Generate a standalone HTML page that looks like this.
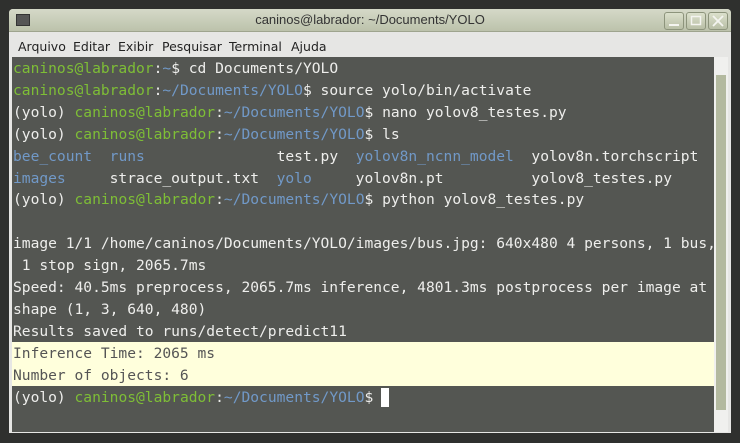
<!DOCTYPE html>
<html><head><meta charset="utf-8"><style>
html,body{margin:0;padding:0;width:740px;height:443px;overflow:hidden;background:#2f302e;}
.win{position:absolute;left:9px;top:9px;width:722px;height:424px;background:#e6e6e4;border-radius:4px 4px 0 0;}
.title{position:absolute;left:0;top:0;width:722px;height:22px;background:linear-gradient(#d5d9c8,#bcc2ab);border-radius:4px 4px 0 0;border-bottom:1px solid #9ea48e;}
.title .t{position:absolute;left:0;width:722px;top:3px;text-align:center;font:13px "Liberation Sans",sans-serif;color:#333;}
.ticon{position:absolute;left:7px;top:5px;width:12px;height:10px;border:1px solid #333;background:#555;}
.btn{position:absolute;top:3px;width:18px;height:16px;border:1px solid #8d947c;border-radius:3px;background:linear-gradient(#dbe0cc,#b9bfa6);}
.btn svg{position:absolute;left:0;top:0}
.menu{position:absolute;left:0;top:23px;height:26px;width:722px;font:12.5px "DejaVu Sans","Liberation Sans",sans-serif;color:#222;}
.menu span{position:absolute;top:7px;}
.term{position:absolute;left:3px;top:48px;width:702px;height:375px;background:#545652;}
.sb{position:absolute;left:705px;top:48px;width:14px;height:375px;background:#f0f0ee;}
.sb .th{position:absolute;left:2px;top:18px;width:10px;height:335px;background:#b3b99f;}
.lines{position:absolute;left:13px;top:58px;font:14.6px "DejaVu Sans Mono","Liberation Mono",monospace;color:#eeeeec;white-space:pre;line-height:21.9px;}
.g{color:#7ebe36}.b{color:#7199c8}
.hl{position:absolute;left:12px;top:342px;width:702px;height:44px;background:#ffffdc;}
.cur{position:absolute;left:381px;top:388px;width:8px;height:19px;background:#fff;}
</style></head><body>
<div class="win">
 <div class="title"><div class="ticon"></div><div class="t">caninos@labrador: ~/Documents/YOLO</div>
  <div class="btn" style="left:655px"><svg width="18" height="16"><path d="M4 12H14" stroke="#f4f4f0" stroke-width="2"/></svg></div>
  <div class="btn" style="left:677px"><svg width="18" height="16"><rect x="4.5" y="3.5" width="9" height="8" fill="none" stroke="#f4f4f0" stroke-width="1.5"/></svg></div>
  <div class="btn" style="left:699px"><svg width="18" height="16"><path d="M4 3L14 13M14 3L4 13" stroke="#f4f4f0" stroke-width="1.8"/></svg></div></div>
 <div class="menu"><span style="left:9px">Arquivo</span><span style="left:64px">Editar</span><span style="left:109px">Exibir</span><span style="left:153px">Pesquisar</span><span style="left:220px">Terminal</span><span style="left:282px">Ajuda</span></div>
 <div class="term"></div>
 <div class="sb"><div class="th"></div></div>
</div>
<div class="hl"></div>
<div class="lines"><span class="g">caninos@labrador</span>:<span class="b">~</span>$ cd Documents/YOLO
<span class="g">caninos@labrador</span>:<span class="b">~/Documents/YOLO</span>$ source yolo/bin/activate
(yolo) <span class="g">caninos@labrador</span>:<span class="b">~/Documents/YOLO</span>$ nano yolov8_testes.py
(yolo) <span class="g">caninos@labrador</span>:<span class="b">~/Documents/YOLO</span>$ ls
<span class="b">bee_count</span>  <span class="b">runs</span>               test.py  <span class="b">yolov8n_ncnn_model</span>  yolov8n.torchscript
<span class="b">images</span>     strace_output.txt  <span class="b">yolo</span>     yolov8n.pt          yolov8_testes.py
(yolo) <span class="g">caninos@labrador</span>:<span class="b">~/Documents/YOLO</span>$ python yolov8_testes.py

image 1/1 /home/caninos/Documents/YOLO/images/bus.jpg: 640x480 4 persons, 1 bus,
 1 stop sign, 2065.7ms
Speed: 40.5ms preprocess, 2065.7ms inference, 4801.3ms postprocess per image at
shape (1, 3, 640, 480)
Results saved to runs/detect/predict11
<span style="color:#555">Inference Time: 2065 ms</span>
<span style="color:#555">Number of objects: 6</span>
(yolo) <span class="g">caninos@labrador</span>:<span class="b">~/Documents/YOLO</span>$ </div>
<div class="cur"></div>
</body></html>
